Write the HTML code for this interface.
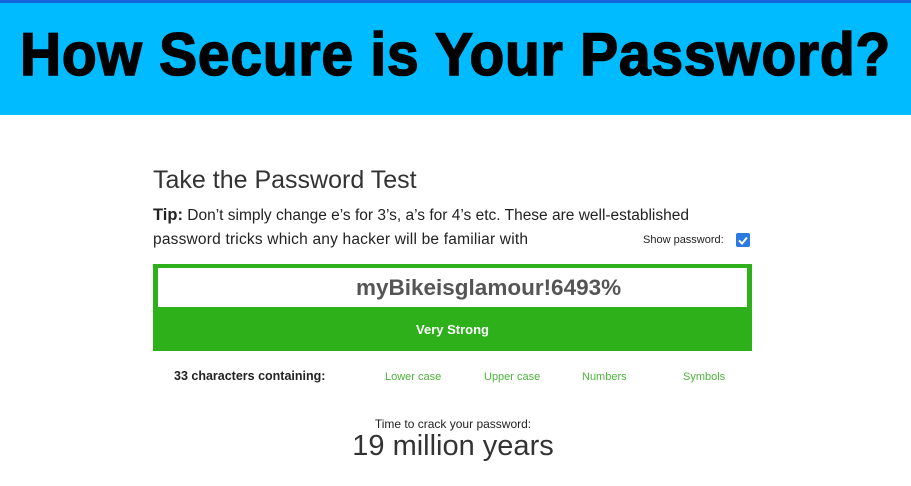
<!DOCTYPE html>
<html><head><style>
body{margin:0;width:911px;height:486px;background:#fff;font-family:"Liberation Sans",sans-serif;position:relative;overflow:hidden}
.hdr{position:absolute;left:0;top:0;width:911px;height:115px;background:#00bbff;border-top:3px solid #1565d8;box-sizing:border-box}
.hdr h1{position:absolute;left:0;width:911px;top:17px;margin:0;text-align:center;font-size:57px;font-weight:bold;color:#000;line-height:70px;letter-spacing:0.75px;-webkit-text-stroke:1.5px #000;transform:scaleY(1.05)}
.a{position:absolute;white-space:nowrap}
</style></head><body>
<div class="hdr"><h1>How Secure is Your Password?</h1></div>
<div class="a" style="left:153px;top:166px;font-size:25px;color:#333">Take the Password Test</div>
<div class="a" style="left:153px;top:206px;font-size:15.5px;color:#222"><b style="font-size:16.5px">Tip:</b> Don’t simply change e’s for 3’s, a’s for 4’s etc. These are well-established</div>
<div class="a" style="left:153px;top:231px;font-size:15.5px;color:#222;letter-spacing:0.2px">password tricks which any hacker will be familiar with</div>
<div class="a" style="left:643px;top:234px;font-size:11px;color:#222">Show password:</div>
<div class="a" style="left:736px;top:233px;width:14px;height:14px;background:#2a7ae2;border-radius:2px"><svg width="14" height="14"><path d="M3 7.5l3 3 5-6" stroke="#fff" stroke-width="2" fill="none"/></svg></div>
<div class="a" style="left:153px;top:264px;width:599px;height:87px;background:#2db01a"></div>
<div class="a" style="left:158px;top:268px;width:589px;height:39px;background:#fff;line-height:39px;font-size:22.5px;font-weight:bold;color:#555"><span style="position:absolute;left:198px">myBikeisglamour!6493%</span></div>
<div class="a" style="left:153px;top:322px;width:599px;text-align:center;font-size:13px;font-weight:bold;color:#fff">Very Strong</div>
<div class="a" style="left:174px;top:369px;font-size:12.5px;font-weight:bold;color:#222">33 characters containing:</div>
<div class="a" style="left:385px;top:371px;font-size:11px;color:#4cb43a">Lower case</div>
<div class="a" style="left:484px;top:371px;font-size:11px;color:#4cb43a">Upper case</div>
<div class="a" style="left:582px;top:371px;font-size:11px;color:#4cb43a">Numbers</div>
<div class="a" style="left:683px;top:371px;font-size:11px;color:#4cb43a">Symbols</div>
<div class="a" style="left:0;width:906px;top:417px;text-align:center;font-size:12px;color:#222">Time to crack your password:</div>
<div class="a" style="left:0;width:906px;top:430px;text-align:center;font-size:29px;color:#333">19 million years</div>
</body></html>
